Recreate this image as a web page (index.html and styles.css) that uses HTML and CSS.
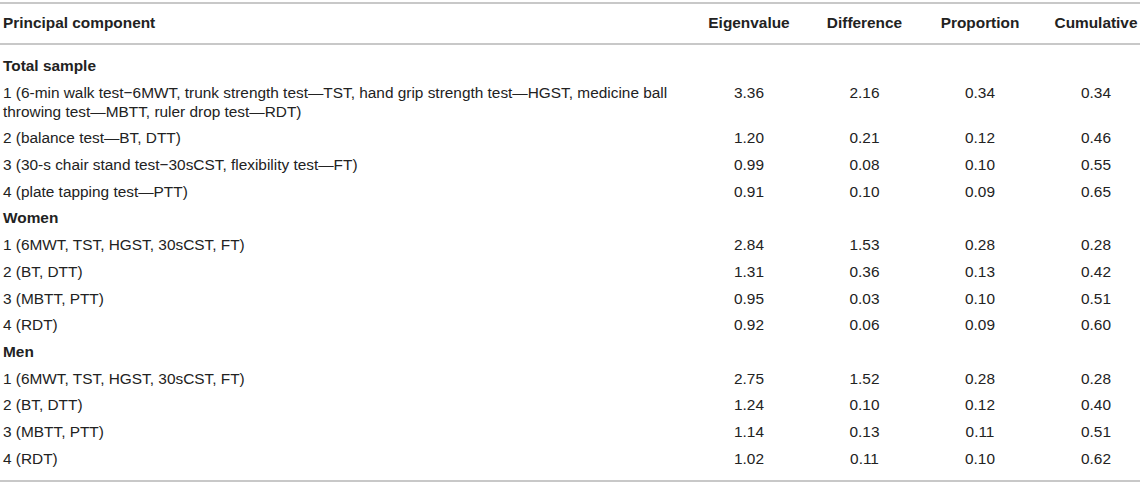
FILE: index.html
```html
<!DOCTYPE html>
<html>
<head>
<meta charset="utf-8">
<link rel="stylesheet" href="styles.css">
</head>
<body>
<table class="pca">
  <colgroup>
    <col class="c-name">
    <col class="c-eig">
    <col class="c-diff">
    <col class="c-prop">
    <col class="c-cum">
  </colgroup>
  <thead>
    <tr>
      <th class="name">Principal component</th>
      <th>Eigenvalue</th>
      <th>Difference</th>
      <th>Proportion</th>
      <th class="cum">Cumulative</th>
    </tr>
  </thead>
  <tbody>
    <tr class="group first"><td class="name" colspan="5">Total sample</td></tr>
    <tr><td class="name">1 (6-min walk test−6MWT, trunk strength test—TST, hand grip strength test—HGST, medicine ball throwing test—MBTT, ruler drop test—RDT)</td><td>3.36</td><td>2.16</td><td>0.34</td><td class="cum">0.34</td></tr>
    <tr><td class="name">2 (balance test—BT, DTT)</td><td>1.20</td><td>0.21</td><td>0.12</td><td class="cum">0.46</td></tr>
    <tr><td class="name">3 (30-s chair stand test−30sCST, flexibility test—FT)</td><td>0.99</td><td>0.08</td><td>0.10</td><td class="cum">0.55</td></tr>
    <tr><td class="name">4 (plate tapping test—PTT)</td><td>0.91</td><td>0.10</td><td>0.09</td><td class="cum">0.65</td></tr>
    <tr class="group"><td class="name" colspan="5">Women</td></tr>
    <tr><td class="name">1 (6MWT, TST, HGST, 30sCST, FT)</td><td>2.84</td><td>1.53</td><td>0.28</td><td class="cum">0.28</td></tr>
    <tr><td class="name">2 (BT, DTT)</td><td>1.31</td><td>0.36</td><td>0.13</td><td class="cum">0.42</td></tr>
    <tr><td class="name">3 (MBTT, PTT)</td><td>0.95</td><td>0.03</td><td>0.10</td><td class="cum">0.51</td></tr>
    <tr><td class="name">4 (RDT)</td><td>0.92</td><td>0.06</td><td>0.09</td><td class="cum">0.60</td></tr>
    <tr class="group"><td class="name" colspan="5">Men</td></tr>
    <tr><td class="name">1 (6MWT, TST, HGST, 30sCST, FT)</td><td>2.75</td><td>1.52</td><td>0.28</td><td class="cum">0.28</td></tr>
    <tr><td class="name">2 (BT, DTT)</td><td>1.24</td><td>0.10</td><td>0.12</td><td class="cum">0.40</td></tr>
    <tr><td class="name">3 (MBTT, PTT)</td><td>1.14</td><td>0.13</td><td>0.11</td><td class="cum">0.51</td></tr>
    <tr class="last"><td class="name">4 (RDT)</td><td>1.02</td><td>0.11</td><td>0.10</td><td class="cum">0.62</td></tr>
  </tbody>
</table>
</body>
</html>
```

FILE: styles.css
```css
html, body {
  margin: 0;
  padding: 0;
  background: #ffffff;
}

body {
  padding-top: 2px;
  font-family: "Liberation Sans", Arial, Helvetica, sans-serif;
  font-size: 15.4px;
  line-height: 19px;
  color: #222222;
}

.pca {
  width: 1140px;
  border-collapse: collapse;
  table-layout: fixed;
  border-top: 2px solid #c8c8c8;
  border-bottom: 2px solid #c8c8c8;
}

.c-name { width: 691px; }
.c-eig { width: 116px; }
.c-diff { width: 115px; }
.c-prop { width: 116px; }
.c-cum { width: 102px; }

.pca th,
.pca td {
  padding: 4px 0 3.7px 0;
  text-align: center;
  vertical-align: top;
  font-weight: normal;
}

.pca thead th {
  font-weight: bold;
  padding-top: 9px;
  padding-bottom: 11px;
  border-bottom: 2px solid #c8c8c8;
}

.pca .name {
  text-align: left;
  padding-left: 3px;
  padding-right: 20px;
}

.pca .cum {
  padding-left: 14px;
}

.pca .group td {
  font-weight: bold;
}

.pca .first td {
  padding-top: 11px;
}

.pca .last td {
  padding-bottom: 12px;
}
```
